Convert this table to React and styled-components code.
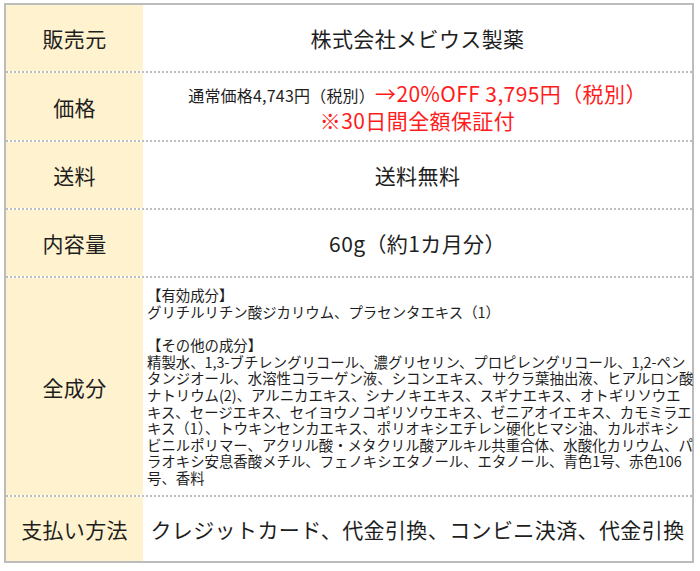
import React from 'react'
import styled, { createGlobalStyle } from 'styled-components'

const GlobalStyle = createGlobalStyle`
  body {
    margin: 0;
    background: #fff;
    font-family: "Noto Sans CJK JP", "Noto Sans", sans-serif;
    color: #1e1e1e;
  }
`;

const Page = styled.div`
  padding: 3px 7px 0 4px;
`;

const Table = styled.div`
  width: 690px;
  border: 2px solid #bcbcbc;
  box-sizing: border-box;
`;

const Row = styled.div`
  display: grid;
  grid-template-columns: 137px 1fr;
  height: ${p => p.h}px;
  box-sizing: border-box;
  border-top: ${p => (p.first ? 'none' : '2px dotted #bdbdbd')};
`;

const Label = styled.div`
  background: #fff2cf;
  display: flex;
  align-items: center;
  justify-content: center;
  font-size: 21px;
  letter-spacing: 0.3px;
`;

const Value = styled.div`
  display: flex;
  flex-direction: column;
  align-items: ${p => (p.left ? 'flex-start' : 'center')};
  justify-content: center;
  text-align: ${p => (p.left ? 'left' : 'center')};
  padding: ${p => (p.left ? '0 4px' : '0')};
  font-size: 21px;
  letter-spacing: 0.4px;
`;

const PriceLine = styled.div`
  line-height: 25px;
  white-space: nowrap;
`;

const Small = styled.span`
  font-size: 16px;
  letter-spacing: 0.2px;
`;

const Red = styled.span`
  color: #ff1c1c;
`;

const Ingredients = styled.div`
  font-size: 14.4px;
  line-height: 16.6px;
  white-space: nowrap;
  letter-spacing: 0;
  margin-top: 1px;
`;

const Blank = styled.div`
  height: 16.6px;
`;

const rows1 = ['【有効成分】', 'グリチルリチン酸ジカリウム、プラセンタエキス（1）'];
const rows2 = [
  '【その他の成分】',
  '精製水、1,3-ブチレングリコール、濃グリセリン、プロピレングリコール、1,2-ペン',
  'タンジオール、水溶性コラーゲン液、シコンエキス、サクラ葉抽出液、ヒアルロン酸',
  'ナトリウム(2)、アルニカエキス、シナノキエキス、スギナエキス、オトギリソウエ',
  'キス、セージエキス、セイヨウノコギリソウエキス、ゼニアオイエキス、カモミラエ',
  'キス（1）、トウキンセンカエキス、ポリオキシエチレン硬化ヒマシ油、カルボキシ',
  'ビニルポリマー、アクリル酸・メタクリル酸アルキル共重合体、水酸化カリウム、パ',
  'ラオキシ安息香酸メチル、フェノキシエタノール、エタノール、青色1号、赤色106',
  '号、香料',
];

export default function App() {
  return (
    <Page>
      <GlobalStyle />
      <Table>
        <Row first h={66}>
          <Label>販売元</Label>
          <Value>株式会社メビウス製薬</Value>
        </Row>
        <Row h={69}>
          <Label>価格</Label>
          <Value>
            <PriceLine>
              <Small>通常価格4,743円（税別）</Small>
              <Red>→20%OFF 3,795円（税別）</Red>
            </PriceLine>
            <PriceLine>
              <Red>※30日間全額保証付</Red>
            </PriceLine>
          </Value>
        </Row>
        <Row h={68}>
          <Label>送料</Label>
          <Value>送料無料</Value>
        </Row>
        <Row h={68}>
          <Label>内容量</Label>
          <Value>60g（約1カ月分）</Value>
        </Row>
        <Row h={219}>
          <Label>全成分</Label>
          <Value left>
            <Ingredients>
              {rows1.map(t => <div key={t}>{t}</div>)}
              <Blank />
              {rows2.map(t => <div key={t}>{t}</div>)}
            </Ingredients>
          </Value>
        </Row>
        <Row h={66}>
          <Label>支払い方法</Label>
          <Value>クレジットカード、代金引換、コンビニ決済、代金引換</Value>
        </Row>
      </Table>
    </Page>
  );
}
